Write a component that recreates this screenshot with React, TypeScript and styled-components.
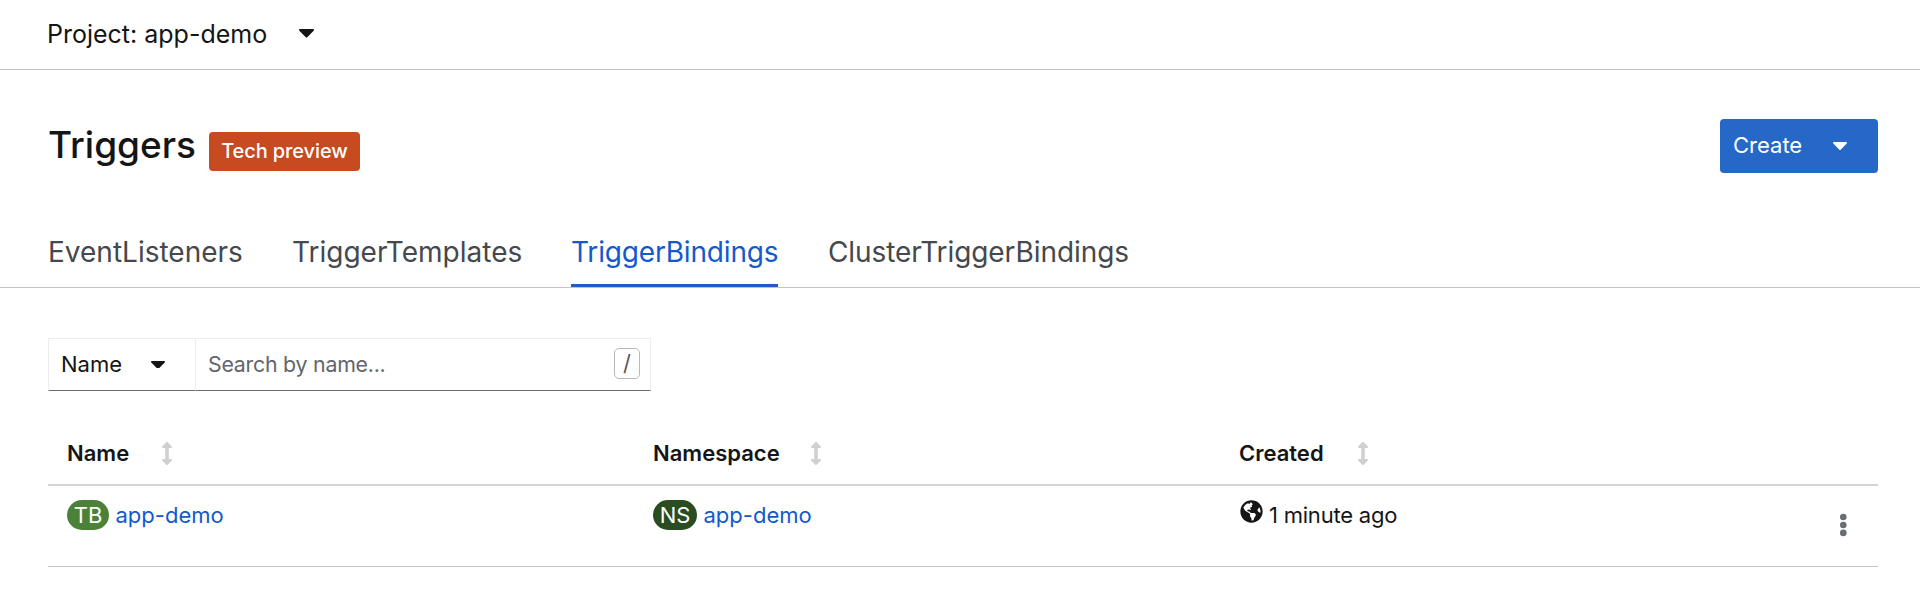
import React from 'react';
import styled, { createGlobalStyle } from 'styled-components';
import { FaGlobeAmericas } from 'react-icons/fa';

const GlobalStyle = createGlobalStyle`
  * { box-sizing: border-box; }
  body {
    margin: 0;
    background: #fff;
    color: #151515;
    font-family: Inter, 'Open Sans', sans-serif;
    font-size: 22px;
  }
  button, input { font: inherit; color: inherit; }
`;

const Page = styled.div`
  height: 595px;
  overflow: hidden;
  display: flex;
  flex-direction: column;
`;

const ProjectBar = styled.header`
  height: 70px;
  padding: 0 48px 2px 47px;
  display: flex;
  align-items: center;
  border-bottom: 1px solid #c4c4c4;
`;

const ProjectToggle = styled.button`
  display: flex;
  align-items: center;
  gap: 32px;
  padding: 0;
  border: 0;
  background: none;
  font-size: 25px;
  line-height: 36px;
  white-space: nowrap;
`;

const CaretSvg = styled.svg<{ $width: number }>`
  display: block;
  flex: none;
  width: ${({ $width }) => $width}px;
  fill: currentColor;
`;

const TitleRow = styled.div`
  height: 152px;
  padding: 49px 42px 0 48px;
  display: flex;
  justify-content: space-between;
  align-items: flex-start;
`;

const TitleGroup = styled.div`
  display: flex;
  gap: 13px;
`;

const Title = styled.h1`
  margin: 0;
  font-size: 37px;
  font-weight: 500;
  line-height: 51px;
  letter-spacing: 0;
`;

const PreviewBadge = styled.span`
  width: 151px;
  height: 39px;
  margin-top: 13px;
  border-radius: 4px;
  background: #c74a20;
  color: #fff;
  font-size: 20px;
  font-weight: 500;
  line-height: 38px;
  letter-spacing: -0.1px;
  text-align: center;
  white-space: nowrap;
`;

const CreateButton = styled.button`
  width: 158px;
  height: 54px;
  padding: 0 31px 0 13px;
  display: flex;
  align-items: center;
  justify-content: space-between;
  border: 0;
  border-radius: 4px;
  background: #2668c8;
  color: #fff;
  line-height: 26px;
`;

const TabList = styled.nav`
  height: 66px;
  padding: 0 47px 0 48px;
  display: flex;
  gap: 50px;
  border-bottom: 1px solid #c4c4c4;
`;

const Tab = styled.a<{ $active?: boolean; $width: number; $spacing?: number }>`
  width: ${({ $width }) => $width}px;
  padding-top: 11px;
  border-bottom: 3px solid ${({ $active }) => ($active ? '#1f5cc8' : 'transparent')};
  color: ${({ $active }) => ($active ? '#1459cc' : '#45484c')};
  font-size: 28px;
  line-height: 38px;
  letter-spacing: ${({ $spacing = 0 }) => $spacing}px;
  white-space: nowrap;
`;

const FilterBar = styled.div`
  width: 603px;
  height: 53px;
  margin: 50px 0 0 48px;
  display: flex;
`;

const FilterToggle = styled.button`
  width: 148px;
  padding: 0 30px 0 12px;
  display: flex;
  align-items: center;
  justify-content: space-between;
  border: 1px solid #ededed;
  border-bottom-color: #6a6e73;
  background: #fff;
`;

const ToggleLabel = styled.span`
  padding-bottom: 2px;
`;

const SearchBox = styled.label`
  flex: 1;
  padding: 0 10px 0 12px;
  display: flex;
  align-items: center;
  border: 1px solid #ededed;
  border-left: 0;
  border-bottom-color: #6a6e73;
`;

const SearchInput = styled.input`
  flex: 1;
  min-width: 0;
  padding: 0 0 1px;
  border: 0;
  outline: 0;
  background: none;
  font-size: 21.3px;
  letter-spacing: -0.22px;
  &::placeholder { color: #62666b; opacity: 1; }
`;

const KeyHint = styled.kbd`
  width: 26px;
  height: 31px;
  margin-bottom: 3px;
  border: 1.5px solid #b8b8b8;
  border-radius: 5px;
  color: #55585c;
  font: 22px/28px Inter, sans-serif;
  text-align: center;
`;

const Table = styled.div`
  margin: 28px 42px 0 48px;
`;

const TableRow = styled.div<{ $head?: boolean }>`
  display: grid;
  grid-template-columns: 586px 586px 1fr 68px;
  height: ${({ $head }) => ($head ? 67 : 81)}px;
  border-bottom: ${({ $head }) => ($head ? '2px solid #d4d4d4' : '1px solid #c4c4c4')};
  font-weight: ${({ $head }) => ($head ? 600 : 400)};
`;

const HeadCell = styled.div<{ $gap: number }>`
  height: 68px;
  padding-left: 19px;
  display: flex;
  align-items: center;
  gap: ${({ $gap }) => $gap}px;
`;

const SortSvg = styled.svg`
  width: 10px;
  height: 23px;
  fill: #d0d0d0;
`;

const Cell = styled.div`
  height: 30px;
  margin-top: 14px;
  padding-left: 19px;
  display: flex;
  align-items: center;
  white-space: nowrap;
`;

const KindBadge = styled.span<{ $color: string; $width: number }>`
  width: ${({ $width }) => $width}px;
  height: 30px;
  margin-right: 6.5px;
  border-radius: 15px;
  background: ${({ $color }) => $color};
  color: #fff;
  line-height: 30px;
  text-align: center;
`;

const ResourceLink = styled.a`
  color: #1459cc;
`;

const Globe = styled(FaGlobeAmericas)`
  width: 23px;
  height: 23px;
  margin: 0 6px 7px 1px;
`;

const Timestamp = styled.span`
  letter-spacing: -0.22px;
`;

const KebabButton = styled.button`
  width: 24px;
  height: 32px;
  margin: 23px 0 0 21px;
  padding: 0;
  border: 0;
  background: none;
  color: #6a6e73;
`;

const KebabSvg = styled.svg`
  display: block;
  width: 24px;
  height: 32px;
  fill: currentColor;
`;

const Caret = ({ width = 14 }: { width?: number }) => (
  <CaretSvg $width={width} viewBox="11 192 298 169">
    <path d="M31.3 192h257.3c17.8 0 26.7 21.5 14.1 34.1L174.1 354.8c-7.8 7.8-20.5 7.8-28.3 0L17.2 226.1C4.6 213.5 13.5 192 31.3 192z" />
  </CaretSvg>
);

const SortIcon = () => (
  <SortSvg viewBox="18 0 220 512">
    <path d="M214.059 377.941H168V134.059h46.059c21.382 0 32.09-25.851 16.971-40.971L144.97 7.029c-9.373-9.373-24.568-9.373-33.941 0L24.971 93.088c-15.119 15.119-4.411 40.971 16.971 40.971H88v243.882H41.941c-21.382 0-32.09 25.851-16.971 40.971l86.059 86.059c9.373 9.373 24.568 9.373 33.941 0l86.059-86.059c15.12-15.119 4.412-40.971-16.97-40.971z" />
  </SortSvg>
);

const tabs = [
  { label: 'EventListeners', width: 194 },
  { label: 'TriggerTemplates', width: 229 },
  { label: 'TriggerBindings', width: 207, spacing: -0.17, active: true },
  { label: 'ClusterTriggerBindings', width: 302, spacing: -0.08 },
];

const columns = [
  { label: 'Name', gap: 33 },
  { label: 'Namespace', gap: 31 },
  { label: 'Created', gap: 34 },
];

export default function App() {
  return (
    <Page>
      <GlobalStyle />
      <ProjectBar>
        <ProjectToggle>
          Project: app-demo <Caret width={15} />
        </ProjectToggle>
      </ProjectBar>
      <TitleRow>
        <TitleGroup>
          <Title>Triggers</Title>
          <PreviewBadge>Tech preview</PreviewBadge>
        </TitleGroup>
        <CreateButton>
          <ToggleLabel>Create</ToggleLabel> <Caret />
        </CreateButton>
      </TitleRow>
      <TabList>
        {tabs.map((t) => (
          <Tab key={t.label} $width={t.width} $spacing={t.spacing} $active={t.active}>
            {t.label}
          </Tab>
        ))}
      </TabList>
      <FilterBar>
        <FilterToggle>
          <ToggleLabel>Name</ToggleLabel> <Caret />
        </FilterToggle>
        <SearchBox>
          <SearchInput placeholder="Search by name..." />
          <KeyHint>/</KeyHint>
        </SearchBox>
      </FilterBar>
      <Table>
        <TableRow $head>
          {columns.map((c) => (
            <HeadCell key={c.label} $gap={c.gap}>
              {c.label}
              <SortIcon />
            </HeadCell>
          ))}
        </TableRow>
        <TableRow>
          <Cell>
            <KindBadge $color="#4b8139" $width={42}>TB</KindBadge>
            <ResourceLink>app-demo</ResourceLink>
          </Cell>
          <Cell>
            <KindBadge $color="#294c20" $width={44}>NS</KindBadge>
            <ResourceLink>app-demo</ResourceLink>
          </Cell>
          <Cell>
            <Globe />
            <Timestamp>1 minute ago</Timestamp>
          </Cell>
          <KebabButton aria-label="Actions">
            <KebabSvg viewBox="0 0 24 32">
              <circle cx="12.3" cy="8" r="3.3" />
              <circle cx="12.3" cy="16" r="3.3" />
              <circle cx="12.3" cy="23.9" r="3.3" />
            </KebabSvg>
          </KebabButton>
        </TableRow>
      </Table>
    </Page>
  );
}
